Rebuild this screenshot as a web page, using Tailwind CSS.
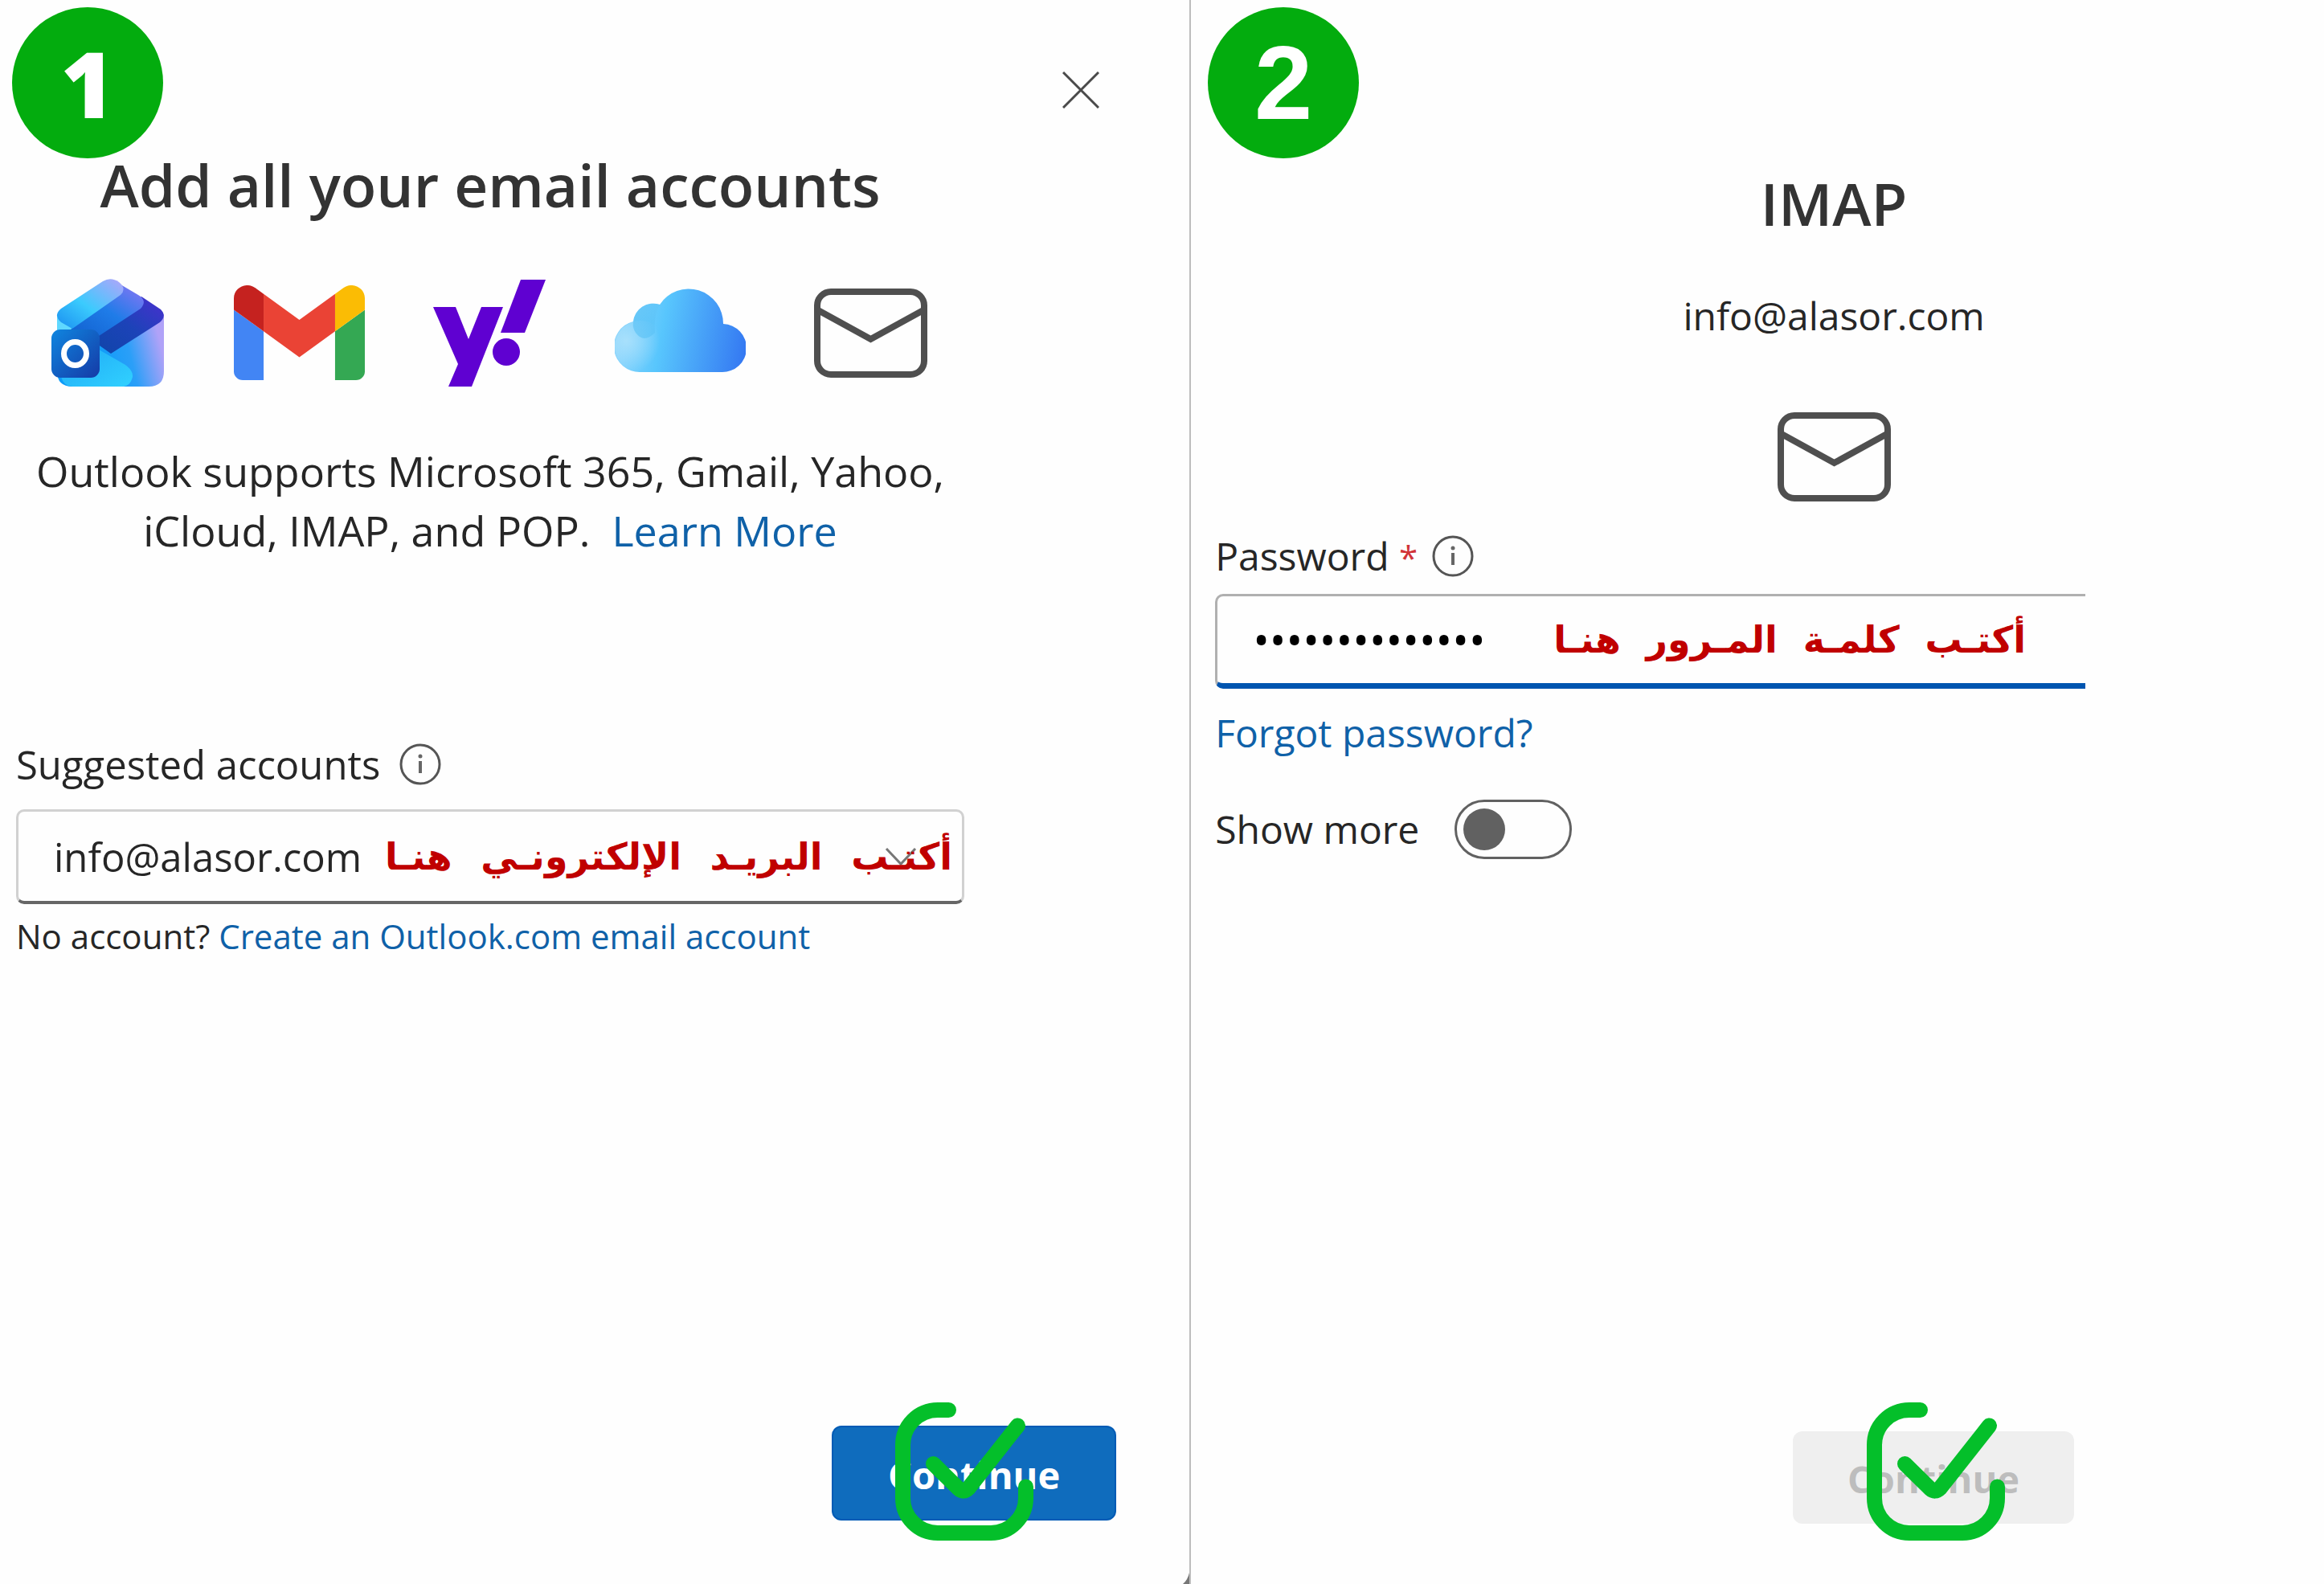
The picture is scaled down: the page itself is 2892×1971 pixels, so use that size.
<!DOCTYPE html>
<html lang="en">
<head>
  <meta charset="UTF-8" />
  <meta name="viewport" content="width=device-width, initial-scale=1.0"/>
  <title>Add all your email accounts</title>
  <script src="https://cdn.jsdelivr.net/npm/@tailwindcss/browser@4"></script>
</head>
<body class="bg-[#fefefe] text-[#262626] font-['Open_Sans','Noto_Sans',sans-serif] min-h-screen flex">

  <!-- shared icons -->
  <svg class="hidden" aria-hidden="true">
    <symbol id="mail" viewBox="0 0 141 111">
      <g fill="none" stroke="#4f4f4f" stroke-width="8">
        <rect x="4" y="4" width="133" height="103" rx="17"/>
        <path d="M5 27L70.500 63L136 27"/>
      </g>
    </symbol>
    <symbol id="info" viewBox="0 0 52 52">
      <circle cx="26" cy="26" r="24" fill="none" stroke="#555" stroke-width="3"/>
      <circle cx="26" cy="16" r="2.500" fill="#666"/>
      <path d="M26 22v15" stroke="#666" stroke-width="4"/>
    </symbol>
    <symbol id="tick" viewBox="0 0 172 172">
      <g fill="none" stroke="#04bf2a" stroke-width="19" stroke-linecap="round">
        <path d="M66.500 9.500H53A43.500 43.500 0 0 0 9.500 53V119A43.500 43.500 0 0 0 53 162.500H119A43.500 43.500 0 0 0 162.500 119V105"/>
        <path d="M47.500 76.500L79 107.500Q85 113 91 107L152.500 29" stroke-linejoin="round"/>
      </g>
    </symbol>
  </svg>

  <!-- step 1 -->
  <main class="relative w-[51.25%] min-h-screen flex flex-col border-r-2 border-[#bdbdbd]">
    <span class="absolute left-[15px] top-[9px] size-[188px] rounded-full bg-[#03ac0e] text-white flex items-center justify-center font-['Open_Sans',sans-serif] font-extrabold text-[114px] leading-none">1</span>

    <div class="flex justify-end pt-[82px] pr-[105px]">
      <button type="button" aria-label="Close" class="size-[60px] flex items-center justify-center">
        <svg class="size-[46px]" viewBox="0 0 46 46" fill="none" stroke="#4a4a4a" stroke-width="3"><path d="M1 1L45 45M45 1L1 45"/></svg>
      </button>
    </div>

    <div class="w-full max-w-[1200px] pl-[20px] flex flex-col">
      <h1 class="mt-[38px] text-center text-[73px] leading-[100px] font-semibold text-[#333]">Add all your email accounts</h1>

      <div class="mt-[66px] h-[136px] pl-[44px] pr-[46px] flex items-center justify-between">
        <!-- Outlook -->
        <svg class="w-[141px] h-[134px]" viewBox="0 0 141 134">
          <defs>
            <linearGradient id="o1" x1="0" y1="1" x2="1" y2="0"><stop offset="0" stop-color="#1a8ef0"/><stop offset=".45" stop-color="#3bcbfd"/><stop offset="1" stop-color="#b3a4fa"/></linearGradient>
            <linearGradient id="o2" x1="0" y1="1" x2="1" y2="0"><stop offset="0" stop-color="#1160cf"/><stop offset=".5" stop-color="#1f7ce8"/><stop offset="1" stop-color="#8d75f5"/></linearGradient>
            <linearGradient id="o3" x1="0" y1="1" x2="1" y2="0"><stop offset="0" stop-color="#0f45a8"/><stop offset=".5" stop-color="#1c43b8"/><stop offset="1" stop-color="#4a2fd0"/></linearGradient>
            <linearGradient id="o4" x1=".4" y1=".7" x2="1" y2=".6"><stop offset="0" stop-color="#0d9bf8"/><stop offset=".5" stop-color="#2b9ff8"/><stop offset="1" stop-color="#b0a2f8"/></linearGradient>
            <linearGradient id="o5" x1="0" y1="0" x2="1" y2="1"><stop offset="0" stop-color="#1ea6f5"/><stop offset="1" stop-color="#31d1ff"/></linearGradient>
            <linearGradient id="o6" x1="0" y1="0" x2="1" y2="1"><stop offset="0" stop-color="#0f86e0"/><stop offset="1" stop-color="#153aa6"/></linearGradient>
          </defs>
          <path d="M7 44V115Q7 134 26 134H121Q140 134 140 115V44L74 60Z" fill="url(#o4)"/>
          <path d="M7 44V70H40L26 62Z" fill="#5fd8ff"/>
          <path d="M45 80L92 107Q104 116 100 125Q98 132 90 134H26Q15 133 12 122Z" fill="url(#o5)"/>
          <path d="M74 93L50 76L112 22L136 38Q144 46 135 54Z" fill="url(#o3)"/>
          <path d="M59 71L24 63L86 7L108 20Q120 27 111 37Z" fill="url(#o2)"/>
          <path d="M26 62L12 54Q2 45 12 37L64 3Q74 -3 84 4Q94 12 86 20Z" fill="url(#o1)"/>
          <rect x="0" y="63" width="60" height="60" rx="11" fill="url(#o6)"/>
          <ellipse cx="29.500" cy="93" rx="14" ry="14.500" fill="none" stroke="#fff" stroke-width="7"/>
        </svg>
        <!-- Gmail -->
        <svg class="w-[163px] h-[118px]" viewBox="52 42 88 66" preserveAspectRatio="none">
          <path fill="#4285f4" d="M58 108h14V74L52 59v43c0 3.320 2.690 6 6 6"/>
          <path fill="#34a853" d="M120 108h14c3.320 0 6-2.690 6-6V59l-20 15"/>
          <path fill="#fbbc04" d="M120 48v26l20-15v-8c0-7.420-8.470-11.650-14.400-7.200"/>
          <path fill="#ea4335" d="M72 74V48l24 18 24-18v26L96 92"/>
          <path fill="#c5221f" d="M52 51v8l20 15V48l-5.600-4.200c-5.940-4.450-14.400-.22-14.400 7.200"/>
        </svg>
        <!-- Yahoo -->
        <svg class="w-[140px] h-[133px]" viewBox="0 0 140 133" fill="#5f01d1">
          <path d="M0 34H28L44 74L60 34H87L48 133H19L31 105Z"/>
          <path d="M109 0H140L114 66H84Z"/>
          <circle cx="91" cy="90" r="17"/>
        </svg>
        <!-- iCloud -->
        <svg class="w-[163px] h-[113px]" viewBox="0 0 163 113">
          <defs>
            <linearGradient id="c1" gradientUnits="userSpaceOnUse" x1="0" y1="55" x2="163" y2="85"><stop offset="0" stop-color="#8fd6fc"/><stop offset=".35" stop-color="#58c6fd"/><stop offset="1" stop-color="#3478f2"/></linearGradient>
            <radialGradient id="c2" gradientUnits="userSpaceOnUse" cx="14" cy="66" r="42"><stop offset="0" stop-color="#a8e0fc"/><stop offset="1" stop-color="#a8e0fc" stop-opacity="0"/></radialGradient>
            <linearGradient id="c3" x1="0" y1="1" x2="1" y2="0"><stop offset="0" stop-color="#4fbdf3"/><stop offset="1" stop-color="#62c5f8"/></linearGradient>
          </defs>
          <path fill="url(#c1)" d="M32 105A32 32 0 0 1 23 42A25 25 0 0 1 56 21A43 43 0 0 1 135 45A30 30 0 0 1 133 105Z"/>
          <circle cx="32" cy="73" r="32" fill="url(#c2)"/>
          <path fill="url(#c3)" opacity=".55" d="M23 44A25 25 0 0 1 56 21Q48 34 50 56Q36 70 26 56Q22 50 23 44Z"/>
        </svg>
        <svg class="w-[141px] h-[111px]"><use href="#mail"/></svg>
      </div>

      <p class="mt-[67px] text-center text-[52px] leading-[74px]">Outlook supports Microsoft 365, Gmail, Yahoo,<br/>iCloud, IMAP, and POP.&nbsp; <a href="#" class="text-[#0f61a8]">Learn More</a></p>

      <div class="mt-[224px] flex items-center gap-[24px]">
        <label for="account" class="text-[49px] leading-[60px]">Suggested accounts</label>
        <svg class="size-[52px]"><use href="#info"/></svg>
      </div>
      <div class="relative mt-[26px] h-[118px] flex items-center pl-[44px] pr-[12px] rounded-[10px] border-3 border-[#d1d1d1] border-b-4 border-b-[#666]">
        <input id="account" type="text" value="info@alasor.com" class="w-[412px] text-[49px] leading-[60px] outline-none"/>
        <svg class="absolute right-[56px] top-[44px] w-[40px] h-[24px]" viewBox="0 0 40 24" fill="none" stroke="#777" stroke-width="3"><path d="M2 2L20 21L38 2"/></svg>
        <span dir="rtl" lang="ar" class="relative flex-1 flex justify-between whitespace-nowrap font-['DejaVu_Sans',sans-serif] font-bold text-[46px] leading-[60px] text-[#c00000]"><span>أكتـب</span> <span>البريـد</span> <span>الإلكترونـي</span> <span>هنـا</span></span>
      </div>
      <p class="mt-[10px] text-[42px] leading-[60px]">No account? <a href="#" class="text-[#0f61a8]">Create an Outlook.com email account</a></p>
    </div>

    <div class="mt-auto flex justify-end pr-[91px] pb-[79px]">
      <div class="relative">
        <button type="button" class="w-[354px] h-[118px] pt-[3px] rounded-[12px] border-2 border-[#005bb5] bg-[#0f6cbd] text-white text-[47px] leading-[60px] font-bold">Continue</button>
        <svg class="absolute left-[79px] top-[-29px] size-[172px]"><use href="#tick"/></svg>
      </div>
    </div>
    <svg class="absolute right-0 bottom-0 w-[8px] h-[14px]" viewBox="0 0 8 14"><path d="M8 0V14H0Q6 9 8 0Z" fill="#777"/></svg>
  </main>

  <!-- step 2 -->
  <section class="relative flex-1 min-h-screen flex flex-col">
    <span class="absolute left-[21px] top-[9px] size-[188px] rounded-full bg-[#03ac0e] text-white flex items-center justify-center font-['Liberation_Sans',sans-serif] font-bold text-[130px] leading-none">2</span>

    <div class="pt-[203px] pl-[190px] flex flex-col items-center">
      <h2 class="text-[73px] leading-[100px] font-semibold text-[#333]">IMAP</h2>
      <p class="mt-[60px] text-[48px] leading-[60px]">info@alasor.com</p>
      <svg class="mt-[90px] w-[141px] h-[111px]"><use href="#mail"/></svg>
    </div>

    <div class="pl-[30px] flex flex-col items-start">
      <div class="mt-[38px] flex items-center gap-[18px]">
        <label for="password" class="text-[48px] leading-[60px]">Password <span class="text-[42px] leading-none text-[#d13438]">*</span></label>
        <svg class="size-[52px]"><use href="#info"/></svg>
      </div>
      <div class="mt-[17px] w-[1083px] h-[118px] flex items-center pl-[44px] pr-[74px] rounded-l-[10px] border-3 border-r-0 border-[#b0b0b0] border-b-7 border-b-[#0055b0]">
        <input id="password" type="password" value="alasormail2024" class="w-[374px] text-[55px] leading-[60px] text-black outline-none"/>
        <span dir="rtl" lang="ar" class="flex-1 flex justify-between whitespace-nowrap font-['DejaVu_Sans',sans-serif] font-bold text-[46px] leading-[60px] text-[#c00000]"><span>أكتـب</span> <span>كلمـة</span> <span>المـرور</span> <span>هنـا</span></span>
      </div>
      <a href="#" class="mt-[25px] text-[48px] leading-[60px] text-[#0f61a8]">Forgot password?</a>
      <label class="mt-[53px] flex items-center gap-[44px] text-[48px] leading-[60px]">
        Show more
        <input type="checkbox" role="switch" class="appearance-none w-[146px] h-[74px] rounded-full border-3 border-[#616161] flex items-center pl-[8px] before:content-[''] before:size-[52px] before:rounded-full before:bg-[#616161]"/>
      </label>
    </div>

    <div class="mt-auto flex justify-end pr-[311px] pb-[75px]">
      <div class="relative">
        <button type="button" disabled class="w-[350px] h-[115px] pt-[3px] rounded-[12px] bg-[#efefef] text-[#bdbdbd] text-[47px] leading-[60px] font-bold">Continue</button>
        <svg class="absolute left-[92px] top-[-36px] size-[172px]"><use href="#tick"/></svg>
      </div>
    </div>
  </section>

</body>
</html>
